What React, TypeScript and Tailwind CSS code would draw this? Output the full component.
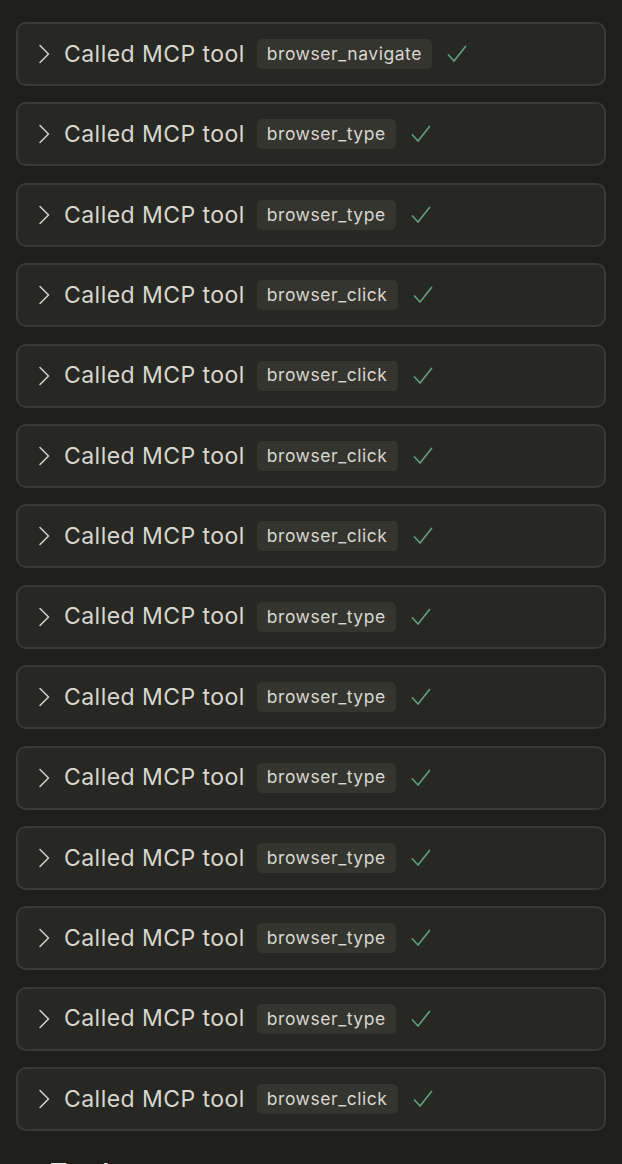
import React from 'react';

const calls: string[] = [
  'browser_navigate',
  'browser_type',
  'browser_type',
  'browser_click',
  'browser_click',
  'browser_click',
  'browser_click',
  'browser_type',
  'browser_type',
  'browser_type',
  'browser_type',
  'browser_type',
  'browser_type',
  'browser_click',
];

const Chevron = () => (
  <svg width="12" height="20" viewBox="0 0 12 20" fill="none" className="shrink-0">
    <path d="M2 1.5 L10.5 10 L2 18.5" stroke="#cfcfc7" strokeWidth="1.6" strokeLinecap="round" strokeLinejoin="round" />
  </svg>
);

const Check = () => (
  <svg width="20" height="18" viewBox="0 0 20 18" fill="none" className="shrink-0">
    <path d="M1.5 10 L7 16 L18.5 1.5" stroke="#5f9f78" strokeWidth="1.7" strokeLinecap="round" strokeLinejoin="round" />
  </svg>
);

const ToolCall: React.FC<{ name: string }> = ({ name }) => (
  <div className="h-[64px] rounded-[10px] border-2 border-[#3a3a35] bg-[#272723] flex items-center pl-[20px]">
    <Chevron />
    <span className="ml-[14px] text-[23px] text-[#d7d7cf] tracking-[0.45px]">Called MCP tool</span>
    <span className="ml-[12px] h-[30px] px-[10px] rounded-[5px] bg-[#35352f] text-[#d7d7cf] text-[17.5px] tracking-[0.55px] flex items-center">
      {name}
    </span>
    <span className="ml-[15px]">
      <Check />
    </span>
  </div>
);

export default function App() {
  return (
    <div
      className="min-h-[1164px] h-[1164px] overflow-hidden bg-[#1e1e1c] px-[16px] pt-[22px]"
      style={{ fontFamily: 'Inter, "Noto Sans", sans-serif' }}
    >
      <div className="flex flex-col gap-[16.4px]">
        {calls.map((c, i) => (
          <ToolCall key={i} name={c} />
        ))}
      </div>
      <h2 className="mt-[22px] ml-[34px] text-[26px] font-semibold text-[#e6e6de]">To-dos</h2>
    </div>
  );
}
